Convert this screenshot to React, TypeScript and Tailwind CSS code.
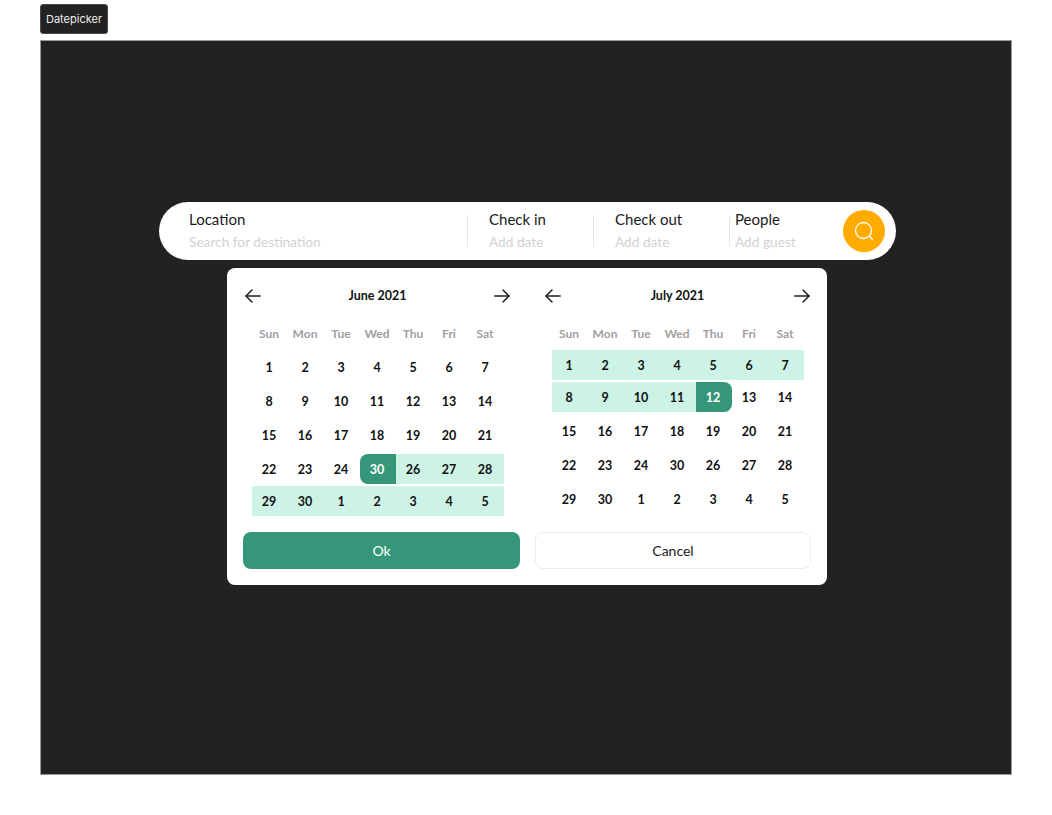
const font = { fontFamily: 'Lato, "Open Sans", sans-serif' };

interface Cell {
  day: number;
  range?: boolean;
  start?: boolean;
  end?: boolean;
}

const weekDays = ['Sun', 'Mon', 'Tue', 'Wed', 'Thu', 'Fri', 'Sat'];

const plain = (days: number[]): Cell[] => days.map((day) => ({ day }));
const inRange = (days: number[]): Cell[] => days.map((day) => ({ day, range: true }));

const june: { cells: Cell[]; gap: string }[] = [
  { cells: plain([1, 2, 3, 4, 5, 6, 7]), gap: 'mt-0' },
  { cells: plain([8, 9, 10, 11, 12, 13, 14]), gap: 'mt-[4px]' },
  { cells: plain([15, 16, 17, 18, 19, 20, 21]), gap: 'mt-[4px]' },
  { cells: [...plain([22, 23, 24]), { day: 30, start: true }, ...inRange([26, 27, 28])], gap: 'mt-[4px]' },
  { cells: inRange([29, 30, 1, 2, 3, 4, 5]), gap: 'mt-[2px]' },
];

const july: { cells: Cell[]; gap: string }[] = [
  { cells: inRange([1, 2, 3, 4, 5, 6, 7]), gap: 'mt-0' },
  { cells: [...inRange([8, 9, 10, 11]), { day: 12, end: true }, ...plain([13, 14])], gap: 'mt-[2px]' },
  { cells: plain([15, 16, 17, 18, 19, 20, 21]), gap: 'mt-[4px]' },
  { cells: plain([22, 23, 24, 30, 26, 27, 28]), gap: 'mt-[4px]' },
  { cells: plain([29, 30, 1, 2, 3, 4, 5]), gap: 'mt-[4px]' },
];

function ArrowLeft() {
  return (
    <svg width="16" height="14" viewBox="0 0 16 14" fill="none" stroke="#1f1f1f" strokeWidth="1.5" strokeLinecap="round" strokeLinejoin="round">
      <path d="M15.2 7H1" />
      <path d="M7 1 1 7l6 6" />
    </svg>
  );
}

function ArrowRight() {
  return (
    <svg width="16" height="14" viewBox="0 0 16 14" fill="none" stroke="#1f1f1f" strokeWidth="1.5" strokeLinecap="round" strokeLinejoin="round">
      <path d="M.8 7H15" />
      <path d="m9 1 6 6-6 6" />
    </svg>
  );
}

function DayCell({ cell }: { cell: Cell }) {
  let tone = 'text-[#111111]';
  if (cell.range) tone = 'bg-[#ccf3e6] text-[#111111]';
  if (cell.start) tone = 'bg-[#359679] text-white rounded-l-lg';
  if (cell.end) tone = 'bg-[#359679] text-white rounded-r-lg';
  return <div className={`flex h-[30px] w-[36px] items-center justify-center pr-[2px] pt-[2px] text-[12.5px] font-bold ${tone}`}>{cell.day}</div>;
}

function Month({ title, rows, top }: { title: string; rows: { cells: Cell[]; gap: string }[]; top: string }) {
  return (
    <div className="w-[265px]">
      <div className="flex h-[24px] items-center justify-between">
        <ArrowLeft />
        <span className="text-[12.5px] font-bold text-[#111111]">{title}</span>
        <ArrowRight />
      </div>
      <div className="mt-[18px] flex w-[252px] translate-x-[7px]">
        {weekDays.map((name) => (
          <span key={name} className="w-[36px] pr-[2px] text-center text-[12px] font-bold leading-[16px] text-[#a0a0a0]">{name}</span>
        ))}
      </div>
      <div className={`w-[252px] translate-x-[7px] ${top}`}>
        {rows.map((row, i) => (
          <div key={i} className={`flex ${row.gap}`}>
            {row.cells.map((cell, j) => (
              <DayCell key={j} cell={cell} />
            ))}
          </div>
        ))}
      </div>
    </div>
  );
}

function Field({ label, hint, width }: { label: string; hint: string; width: string }) {
  return (
    <div className={`shrink-0 pb-[2px] ${width}`}>
      <div className="text-[15px] leading-[20px] text-[#1a1a1a]">{label}</div>
      <div className="mt-[4px] text-[13.7px] leading-[18px] text-[#d2d2d2]">{hint}</div>
    </div>
  );
}

export default function App() {
  return (
    <div className="h-[815px] w-[1052px] bg-white" style={font}>
      <div className="pl-[40px] pt-[4px]">
        <div
          className="flex h-[30px] w-[68px] items-center justify-center rounded-[3px] border border-[#4a4a4a] bg-[#222222] text-[11px] text-[#f0f0f0]"
          style={{ fontFamily: 'Inter, sans-serif' }}
        >
          Datepicker
        </div>
      </div>

      <div className="ml-[40px] mt-[6px] h-[735px] w-[972px] border border-[#9a9a9a] bg-[#222222] pt-[161px]">
        <div className="ml-[118px] flex h-[58px] w-[737px] items-center rounded-[29px] bg-white pl-[30px] pr-[11px]">
          <Field label="Location" hint="Search for destination" width="w-[278px]" />
          <div className="h-[32px] w-px bg-[#e8e8e8]" />
          <div className="w-[21px]" />
          <Field label="Check in" hint="Add date" width="w-[104px]" />
          <div className="h-[32px] w-px bg-[#e8e8e8]" />
          <div className="w-[21px]" />
          <Field label="Check out" hint="Add date" width="w-[114px]" />
          <div className="h-[32px] w-px bg-[#e8e8e8]" />
          <div className="w-[5px]" />
          <Field label="People" hint="Add guest" width="w-[108px]" />
          <div className="flex h-[42px] w-[42px] items-center justify-center rounded-full bg-[#ffab00]">
            <svg width="20" height="20" viewBox="0 0 20 20" fill="none" stroke="white" strokeWidth="1.3" strokeLinecap="round">
              <circle cx="9.5" cy="9.5" r="8" />
              <path d="m15.5 15.5 3 3" />
            </svg>
          </div>
        </div>

        <div className="ml-[186px] mt-[8px] h-[317px] w-[600px] rounded-lg bg-white px-[16px] pt-[16px]">
          <div className="flex gap-[35px] pl-[2px]">
            <Month title="June 2021" rows={june} top="mt-[10px]" />
            <Month title="July 2021" rows={july} top="mt-[8px]" />
          </div>
          <div className="mt-[16px] flex gap-[15px]">
            <div className="flex h-[37px] w-[277px] items-center justify-center rounded-lg bg-[#359679] text-[14px] text-white">Ok</div>
            <div className="flex h-[37px] w-[276px] items-center justify-center rounded-lg border border-[#ececec] bg-white text-[14px] text-[#1a1a1a]">Cancel</div>
          </div>
        </div>
      </div>
    </div>
  );
}
